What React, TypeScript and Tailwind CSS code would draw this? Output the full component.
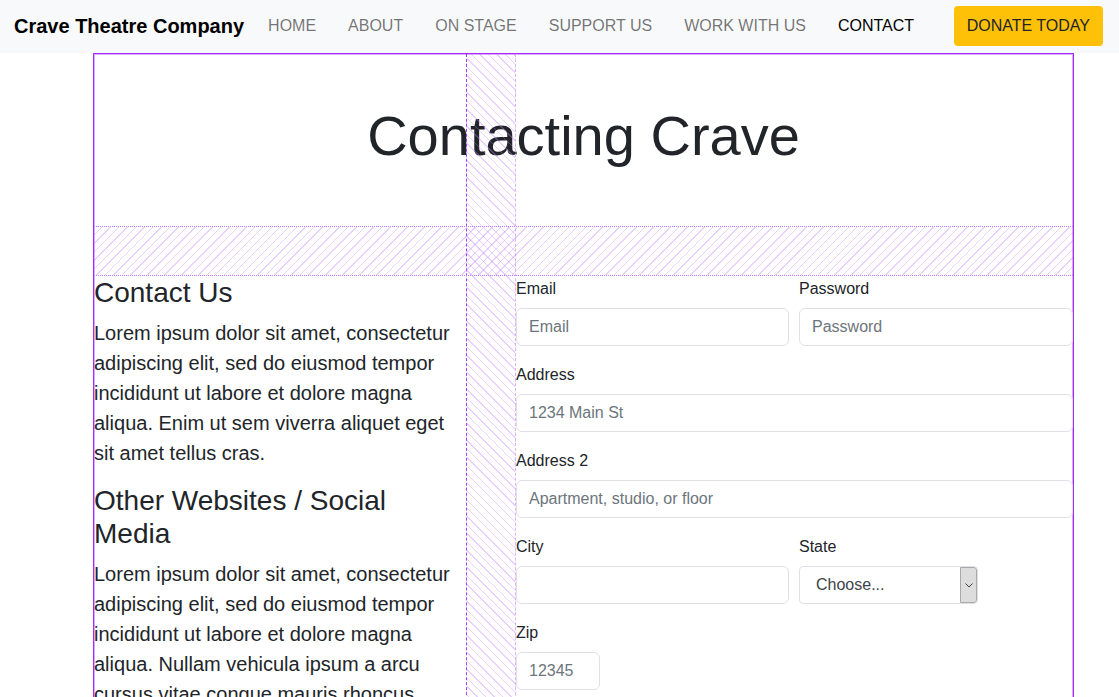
import React from 'react';

const navLinks = ['HOME', 'ABOUT', 'ON STAGE', 'SUPPORT US', 'WORK WITH US'];

const Field: React.FC<{ label: string; placeholder?: string; className?: string }> = ({ label, placeholder, className }) => (
  <div className={className}>
    <label className="block mb-2 pt-[1px] h-6 text-base leading-6 text-[#212529]">{label}</label>
    <input
      type="text"
      placeholder={placeholder}
      className="block w-full h-[38px] px-3 text-base leading-6 text-[#212529] bg-white border border-[#dee2e6] rounded-md outline-none placeholder:text-[#6c757d]"
    />
  </div>
);

const App: React.FC = () => {
  return (
    <div className="min-h-screen bg-white font-['Liberation_Sans',Arial,sans-serif] text-[#212529]">
      {/* Navbar */}
      <nav className="h-[53px] bg-[#f8f9fa] flex items-center pl-[14px] pr-4 pb-[1px]">
        <span className="text-[20px] font-bold text-black mr-[24px]">Crave Theatre Company</span>
        <div className="flex items-center gap-8 text-base">
          {navLinks.map(link => (
            <a key={link} href="#" className="text-black/55">{link}</a>
          ))}
          <a href="#" className="text-black">CONTACT</a>
        </div>
        <button className="ml-auto h-10 px-[13px] bg-[#ffc107] rounded-[4px] text-base text-[#212529]">
          DONATE TODAY
        </button>
      </nav>

      {/* Page grid (with devtools grid overlay outline) */}
      <div className="ml-[93px] w-[981px] bg-[#a42bff] pt-px pl-px pr-px">
        <div className="bg-white shadow-[inset_1px_1px_0_0_#dcaaff,inset_-1px_0_0_0_#dcaaff] grid grid-cols-[372px_50px_557px] grid-rows-[172px_50px_auto]">
          <div className="col-start-1 col-span-3 row-start-1 flex items-center justify-center">
            <h1 className="text-[56px] leading-[1.2] mb-2 text-[#212529]">Contacting Crave</h1>
          </div>

          {/* Left column */}
          <div className="col-start-1 row-start-3">
            <h3 className="text-[28px] leading-[1.2] mb-2">Contact Us</h3>
            <p className="text-[20px] leading-[30px] mb-4">
              Lorem ipsum dolor sit amet, consectetur adipiscing elit, sed do eiusmod tempor incididunt ut labore et
              dolore magna aliqua. Enim ut sem viverra aliquet eget sit amet tellus cras.
            </p>
            <h3 className="text-[28px] leading-[1.2] mb-2">Other Websites / Social Media</h3>
            <p className="text-[20px] leading-[30px] mb-4">
              Lorem ipsum dolor sit amet, consectetur adipiscing elit, sed do eiusmod tempor incididunt ut labore et
              dolore magna aliqua. Nullam vehicula ipsum a arcu cursus vitae congue mauris rhoncus aenean vel elit
              scelerisque mauris.
            </p>
          </div>

          {/* Form */}
          <form className="col-start-3 row-start-3 grid grid-cols-[273px_274px] gap-x-[10px] gap-y-4 content-start">
            <Field label="Email" placeholder="Email" />
            <Field label="Password" placeholder="Password" />
            <Field label="Address" placeholder="1234 Main St" className="col-span-2" />
            <Field label="Address 2" placeholder="Apartment, studio, or floor" className="col-span-2" />
            <Field label="City" />
            <div>
              <label className="block mb-2 pt-[1px] h-6 text-base leading-6">State</label>
              <div className="flex w-[179px] h-[38px] border border-[#dee2e6] rounded-[4px] bg-white overflow-hidden">
                <span className="flex-1 flex items-center pl-4 text-base text-[#3d4349]">Choose...</span>
                <span className="w-[17px] bg-[#dddddd] border border-[#a9a9a9] rounded-r-[3px] flex items-center justify-center">
                  <svg width="8" height="5" viewBox="0 0 8 5" fill="none">
                    <path d="M0.5 0.5 L4 4 L7.5 0.5" stroke="#444" strokeWidth="1" />
                  </svg>
                </span>
              </div>
            </div>
            <div className="col-span-2">
              <label className="block mb-2 pt-[1px] h-6 text-base leading-6">Zip</label>
              <input
                type="text"
                placeholder="12345"
                className="block w-[84px] h-[38px] px-3 text-base bg-white border border-[#dee2e6] rounded-md outline-none placeholder:text-[#6c757d]"
              />
            </div>
          </form>

          {/* overlay: column gap */}
          <div className="col-start-2 row-start-1 row-span-3 border-l border-r border-dashed border-l-[#a43cff] border-r-[#dcb0ff] bg-[repeating-linear-gradient(45deg,rgba(196,120,255,0.35)_0px,rgba(196,120,255,0.35)_1px,transparent_1px,transparent_6px)]" />
          {/* overlay: row gap */}
          <div className="col-start-1 col-span-3 row-start-2 border-t border-b border-dotted border-[#c57dff] bg-[repeating-linear-gradient(-45deg,rgba(196,120,255,0.35)_0px,rgba(196,120,255,0.35)_1px,transparent_1px,transparent_6px)]" />
        </div>
      </div>
    </div>
  );
};

export default App;
